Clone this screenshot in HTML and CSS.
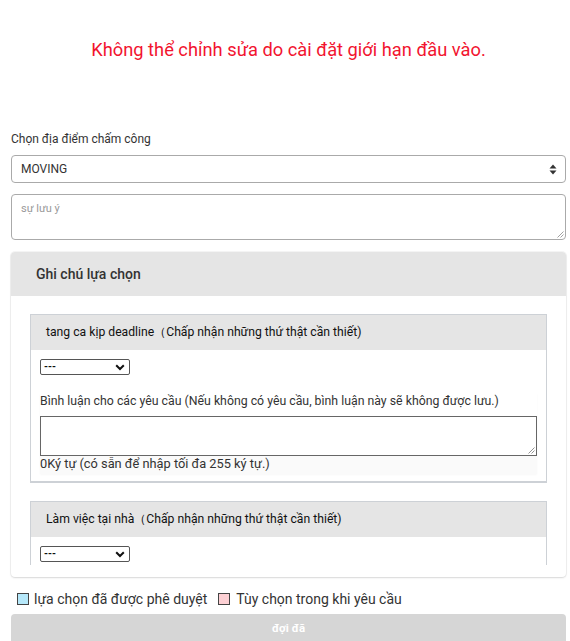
FILE: index.html
```html
<!DOCTYPE html>
<html lang="vi">
<head>
<meta charset="utf-8">
<link rel="stylesheet" href="styles.css">
</head>
<body>
<div class="page">
  <p class="error">Không thể chỉnh sửa do cài đặt giới hạn đầu vào.</p>

  <label class="field-label">Chọn địa điểm chấm công</label>
  <div class="select-box">
    <span>MOVING</span>
    <svg class="updown" width="8" height="11" viewBox="0 0 8 11"><path d="M4 0.5 L7.5 4.5 H0.5 Z M4 10.5 L7.5 6.5 H0.5 Z" fill="#333"/></svg>
  </div>
  <div class="note-box">
    <span class="placeholder">sự lưu ý</span>
    <svg class="grip" width="8" height="8" viewBox="0 0 8 8"><path d="M7.5 1.5 L1.5 7.5 M7.5 4.5 L4.5 7.5" stroke="#888" stroke-width="0.8"/></svg>
  </div>

  <div class="panel">
    <div class="panel-head">Ghi chú lựa chọn</div>
    <div class="panel-body">
      <div class="scroller">
        <div class="card">
          <div class="card-head">tang ca kịp deadline（Chấp nhận những thứ thật cần thiết)</div>
          <div class="card-body">
            <div class="mini-select"><span>---</span><svg width="10" height="7" viewBox="0 0 10 7"><path d="M1.2 1.2 L5 5 L8.8 1.2" stroke="#111" stroke-width="2" fill="none"/></svg></div>
            <div class="comment">
              <div class="comment-label">Bình luận cho các yêu cầu (Nếu không có yêu cầu, bình luận này sẽ không được lưu.)</div>
              <div class="comment-area"><svg class="grip" width="8" height="8" viewBox="0 0 8 8"><path d="M7.5 1.5 L1.5 7.5 M7.5 4.5 L4.5 7.5" stroke="#777" stroke-width="0.8"/></svg></div>
              <div class="count">0Ký tự (có sẵn để nhập tối đa 255 ký tự.)</div>
            </div>
          </div>
        </div>
        <div class="card">
          <div class="card-head">Làm việc tại nhà（Chấp nhận những thứ thật cần thiết)</div>
          <div class="card-body">
            <div class="mini-select"><span>---</span><svg width="10" height="7" viewBox="0 0 10 7"><path d="M1.2 1.2 L5 5 L8.8 1.2" stroke="#111" stroke-width="2" fill="none"/></svg></div>
          </div>
        </div>
      </div>
    </div>
  </div>

  <div class="legend">
    <span class="swatch blue"></span><span class="legend-text">lựa chọn đã được phê duyệt</span>
    <span class="swatch pink"></span><span class="legend-text">Tùy chọn trong khi yêu cầu</span>
  </div>

  <div class="wait-btn">đợi đã</div>
</div>
</body>
</html>
```

FILE: styles.css
```css
* { box-sizing: border-box; }
html, body { margin: 0; padding: 0; background: #fff; }
body { font-family: Roboto, "Noto Sans", sans-serif; color: #333; }
.page { padding: 0 4px 0 11px; width: 570px; overflow: hidden; }

.error {
  margin: 0;
  padding-top: 38px;
  height: 131px;
  text-align: center;
  color: #f2142f;
  font-size: 18.3px;
  line-height: 24px;
  font-weight: 400;
}

.field-label {
  display: block;
  font-size: 12px;
  line-height: 16px;
  margin-bottom: 8px;
  color: #333;
}

.select-box {
  height: 28px;
  border: 1px solid #aaa;
  border-radius: 4px;
  display: flex;
  align-items: center;
  justify-content: space-between;
  padding: 0 8px 0 9px;
  font-size: 12px;
  color: #333;
  margin-bottom: 11px;
}

.note-box {
  position: relative;
  height: 46px;
  border: 1px solid #aaa;
  border-radius: 4px;
  padding: 7px 9px;
  font-size: 11px;
  line-height: 14px;
  margin-bottom: 12px;
}
.placeholder { color: #999; }
.grip { position: absolute; right: 1px; bottom: 1px; }

.panel {
  border-radius: 4px;
  box-shadow: 0 1px 2px rgba(0,0,0,0.12), 0 0 0 1px rgba(0,0,0,0.04);
  background: #fff;
  margin-bottom: 11px;
}
.panel-head {
  background: #e5e5e5;
  height: 44px;
  padding: 0 25px;
  display: flex;
  align-items: center;
  font-size: 14px;
  font-weight: 500;
  color: #333;
  border-radius: 4px 4px 0 0;
}
.panel-body { padding: 18px 19px 12px; }
.scroller {
  height: 251px;
  overflow: hidden;
  display: flex;
  flex-direction: column;
  gap: 18px;
}

.card {
  border: 1px solid #cdd1d6;
  border-bottom-width: 2px;
  flex: none;
}
.card-head {
  background: #e5e5e5;
  height: 35px;
  display: flex;
  align-items: center;
  padding: 0 15px;
  font-size: 12.2px;
  color: #111;
}
.card-body { padding: 9px 9px 7px; }

.mini-select {
  width: 90px;
  height: 16px;
  border: 1px solid #555;
  border-radius: 2px;
  display: flex;
  align-items: center;
  justify-content: space-between;
  padding: 0 4px 0 3px;
  font-size: 10px;
  font-weight: 700;
  color: #111;
  line-height: 1;
}

.comment {
  margin-top: 18px;
  background: #fafafa;
  box-shadow: 0 1px 2px rgba(0,0,0,0.03);
}
.comment-label {
  font-size: 12.3px;
  line-height: 16px;
  color: #333;
  padding-bottom: 7px;
  background: #fff;
}
.comment-area {
  position: relative;
  height: 40px;
  border: 1px solid #666;
  background: #fff;
}
.count {
  font-size: 12.8px;
  line-height: 16px;
  padding: 0 0 2px;
  color: #333;
}

.legend {
  display: flex;
  align-items: center;
  height: 22px;
  padding-left: 6px;
  font-size: 14px;
  color: #333;
}
.swatch {
  width: 12px;
  height: 12px;
  border: 1px solid #444;
  margin-right: 5px;
}
.swatch.blue { background: #b6e8fa; }
.swatch.pink { background: #fdd0d4; margin-left: 11px; margin-right: 6px; }
.legend-text { line-height: 16px; }

.wait-btn {
  margin-top: 4px;
  height: 32px;
  background: #d6d6d6;
  border-radius: 4px;
  color: #fff;
  font-weight: 700;
  font-size: 11.5px;
  text-align: center;
  padding-top: 7px;
}
```
